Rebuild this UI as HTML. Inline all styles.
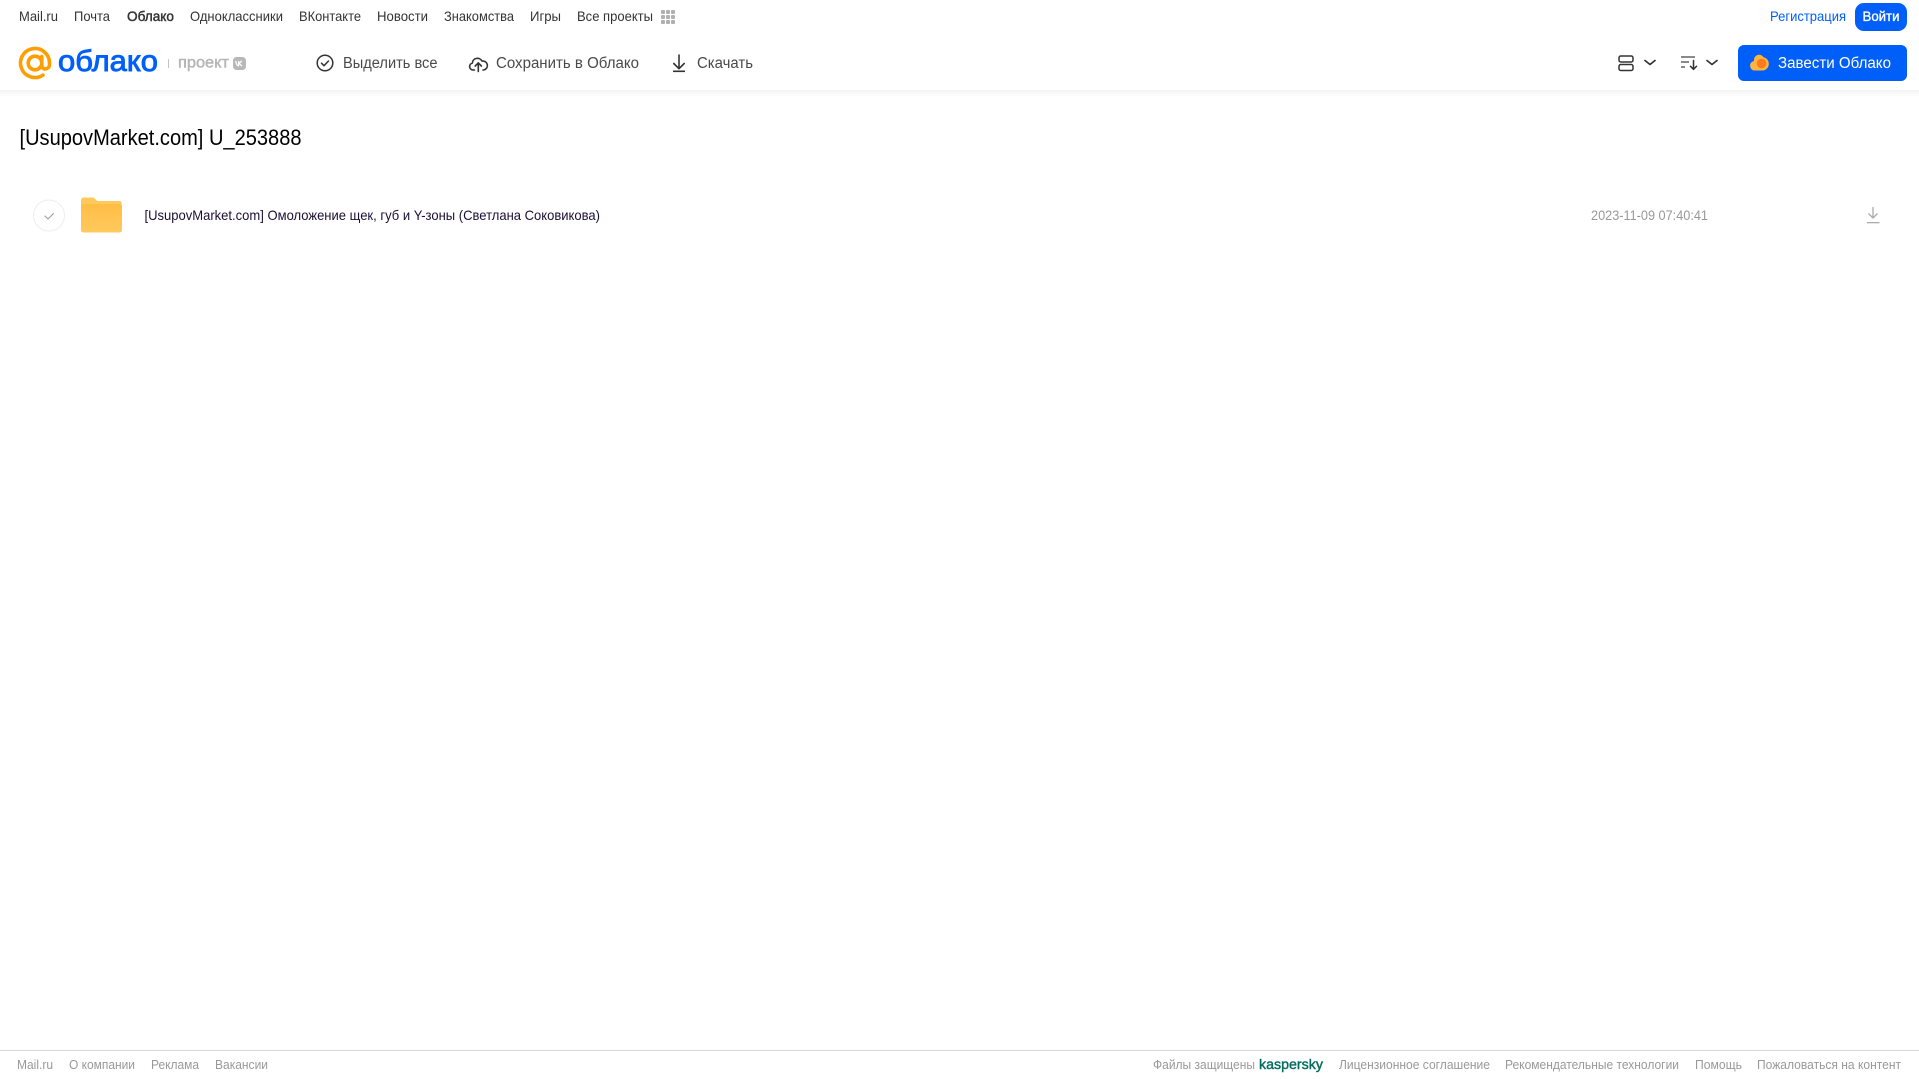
<!DOCTYPE html>
<html lang="ru">
<head>
<meta charset="utf-8">
<title>[UsupovMarket.com] U_253888</title>
<style>
html,body{margin:0;padding:0;background:#fff;width:1919px;height:1079px;overflow:hidden}
svg{display:block;position:absolute;left:0;top:0}
text{font-family:"Liberation Sans",sans-serif;white-space:pre}
.t{font-size:14px;fill:#333}
.a{font-size:15.500px;fill:#4a4a4a}
.f{font-size:13px;fill:#999}
</style>
</head>
<body>
<svg width="1919" height="1079" viewBox="0 0 1919 1079" xmlns="http://www.w3.org/2000/svg">
<defs>
<linearGradient id="sh" x1="0" y1="0" x2="0" y2="1"><stop offset="0" stop-color="#f3f3f3"/><stop offset="1" stop-color="#fff"/></linearGradient>
<linearGradient id="fd" x1="0" y1="0" x2="0" y2="1"><stop offset="0" stop-color="#ffbe45"/><stop offset="1" stop-color="#ffc95e"/></linearGradient>
</defs>
<rect x="0" y="90" width="1919" height="7" fill="url(#sh)"/>

<!-- top nav -->
<text class="t" x="19" y="21" textLength="39" lengthAdjust="spacingAndGlyphs">Mail.ru</text>
<text class="t" x="74" y="21" textLength="36" lengthAdjust="spacingAndGlyphs">Почта</text>
<text class="t" x="127" y="21" textLength="47" lengthAdjust="spacingAndGlyphs" stroke="#333" stroke-width=".45">Облако</text>
<text class="t" x="190" y="21" textLength="93" lengthAdjust="spacingAndGlyphs">Одноклассники</text>
<text class="t" x="299" y="21" textLength="62" lengthAdjust="spacingAndGlyphs">ВКонтакте</text>
<text class="t" x="377" y="21" textLength="51" lengthAdjust="spacingAndGlyphs">Новости</text>
<text class="t" x="444" y="21" textLength="70" lengthAdjust="spacingAndGlyphs">Знакомства</text>
<text class="t" x="530" y="21" textLength="31" lengthAdjust="spacingAndGlyphs">Игры</text>
<text class="t" x="577" y="21" textLength="76" lengthAdjust="spacingAndGlyphs">Все проекты</text>
<g fill="#b0b0b0">
<rect x="661" y="10" width="4" height="4" rx="1"/><rect x="666" y="10" width="4" height="4" rx="1"/><rect x="671" y="10" width="4" height="4" rx="1"/>
<rect x="661" y="15" width="4" height="4" rx="1"/><rect x="666" y="15" width="4" height="4" rx="1"/><rect x="671" y="15" width="4" height="4" rx="1"/>
<rect x="661" y="20" width="4" height="4" rx="1"/><rect x="666" y="20" width="4" height="4" rx="1"/><rect x="671" y="20" width="4" height="4" rx="1"/>
</g>

<text x="1770" y="21" font-size="14" fill="#005ff9" textLength="76" lengthAdjust="spacingAndGlyphs">Регистрация</text>
<rect x="1855" y="3" width="52" height="28" rx="9" fill="#005ff9"/>
<text x="1862.500" y="21" font-size="14" fill="#fff" stroke="#fff" stroke-width=".35" textLength="37" lengthAdjust="spacingAndGlyphs">Войти</text>

<!-- logo -->
<g fill="none" stroke="#ff9e00" stroke-width="3.600">
<circle cx="35" cy="63" r="6.800"/>
<path d="M41.800 56.500v9c0 4.800 7.700 4.800 7.700-1.500v-1a14.500 14.500 0 1 0-6.500 12.100" stroke-linecap="round"/>
</g>
<text x="58" y="71" font-size="30" fill="#005ff9" stroke="#005ff9" stroke-width=".9" textLength="100" lengthAdjust="spacingAndGlyphs">облако</text>
<rect x="168" y="59" width="1" height="9" fill="#c4c4c4"/>
<text x="178" y="67.500" font-size="15.500" fill="#b4b4b4" stroke="#b4b4b4" stroke-width=".4" textLength="51" lengthAdjust="spacingAndGlyphs">проект</text>
<rect x="233" y="57" width="13" height="13" rx="3.500" fill="#b8b8b8"/>
<path d="M235.500 61l1.300 3.500c.4 1 1 1.200 1.800 1.200v-4.700M241.800 60.800l-2.600 2.600 2.800 2.800" fill="none" stroke="#fff" stroke-width="1.200"/>

<!-- toolbar -->
<circle cx="325" cy="63" r="7.800" fill="none" stroke="#333" stroke-width="1.500"/>
<path d="M321.500 63.200l2.500 2.500 4.500-4.700" fill="none" stroke="#333" stroke-width="1.500" stroke-linecap="round" stroke-linejoin="round"/>
<text class="a" x="343" y="68" textLength="94.500" lengthAdjust="spacingAndGlyphs">Выделить все</text>

<path d="M474.500 70h-1.500a3.500 3.500 0 0 1-.7-6.900 5.200 5.200 0 0 1 9.800-2 4.500 4.500 0 0 1 1.600 8.900h-.7" fill="none" stroke="#333" stroke-width="1.600" stroke-linecap="round" stroke-linejoin="round"/>
<path d="M478.300 71.500V63M475.200 66l3.100-3.100 3.100 3.100" fill="none" stroke="#333" stroke-width="1.600" stroke-linecap="round" stroke-linejoin="round"/>
<text class="a" x="496" y="68" textLength="143" lengthAdjust="spacingAndGlyphs">Сохранить в Облако</text>

<path d="M679 55v13.500M673.800 63.500l5.200 5.200 5.200-5.200" fill="none" stroke="#333" stroke-width="1.600" stroke-linecap="round" stroke-linejoin="round"/>
<rect x="673" y="70.500" width="12" height="1.600" fill="#333"/>
<text class="a" x="697" y="68" textLength="56" lengthAdjust="spacingAndGlyphs">Скачать</text>

<!-- right toolbar -->
<rect x="1619" y="56" width="14" height="6" rx="1.800" fill="none" stroke="#333" stroke-width="1.500"/>
<rect x="1619" y="64.500" width="14" height="6" rx="1.800" fill="none" stroke="#333" stroke-width="1.500"/>
<path d="M1645 60.500l5 4 5-4" fill="none" stroke="#333" stroke-width="1.700" stroke-linecap="round" stroke-linejoin="round"/>
<path d="M1681 57h14M1681 62h8M1681 67h4" fill="none" stroke="#444" stroke-width="1.300"/>
<path d="M1693.500 60.500v8.500M1690.500 66.300l3 3 3-3" fill="none" stroke="#333" stroke-width="1.500" stroke-linecap="round" stroke-linejoin="round"/>
<path d="M1707 60.500l5 4 5-4" fill="none" stroke="#333" stroke-width="1.700" stroke-linecap="round" stroke-linejoin="round"/>

<rect x="1738" y="45" width="169" height="36" rx="6" fill="#005ff9"/>
<path d="M1755 70.500a4.800 4.800 0 0 1-3.500-8.200c1-.9 1.800-1 2.500-1.300a5.200 5.200 0 0 1 9.500-3.800 6.500 6.500 0 0 1 5.300 6.500 6.600 6.600 0 0 1-6.500 6.800z" fill="#ffb53d"/>
<circle cx="1761.500" cy="63.500" r="4.800" fill="#ff7a1f"/>
<text x="1778" y="68" font-size="15.500" fill="#fff" textLength="113" lengthAdjust="spacingAndGlyphs">Завести Облако</text>

<!-- title -->
<text x="19.500" y="145" font-size="22" fill="#000" textLength="282" lengthAdjust="spacingAndGlyphs">[UsupovMarket.com] U_253888</text>

<!-- row -->
<circle cx="49" cy="215.500" r="15.500" fill="#fff" stroke="#eeeeee" stroke-width="1"/>
<path d="M45 216l3 3 5.500-5.500" fill="none" stroke="#a3a3a3" stroke-width="1.200" stroke-linecap="round" stroke-linejoin="round"/>
<path d="M81 200a2.500 2.500 0 0 1 2.500-2.500h9c2.500 0 3.500 3.500 5.500 3.500h21.500a2 2 0 0 1 2 2v6H81z" fill="#ffc95e"/>
<rect x="81" y="204" width="41" height="28.500" rx="2.500" fill="url(#fd)"/>
<text x="144.500" y="220" font-size="14" fill="#1a1033" textLength="455.500" lengthAdjust="spacingAndGlyphs">[UsupovMarket.com] Омоложение щек, губ и Y-зоны (Светлана Соковикова)</text>
<text x="1591" y="220" font-size="14" fill="#999" textLength="117" lengthAdjust="spacingAndGlyphs">2023-11-09 07:40:41</text>
<path d="M1873 207v11M1868.500 213.500l4.500 4.500 4.500-4.500" fill="none" stroke="#ababab" stroke-width="1.300" stroke-linejoin="round"/>
<rect x="1867" y="222" width="12.500" height="1.300" fill="#ababab"/>

<!-- footer -->
<rect x="0" y="1050" width="1919" height="1" fill="#d6d6d6"/>
<text class="f" x="17" y="1069" textLength="36" lengthAdjust="spacingAndGlyphs">Mail.ru</text>
<text class="f" x="69" y="1069" textLength="66" lengthAdjust="spacingAndGlyphs">О компании</text>
<text class="f" x="151" y="1069" textLength="48" lengthAdjust="spacingAndGlyphs">Реклама</text>
<text class="f" x="215" y="1069" textLength="53" lengthAdjust="spacingAndGlyphs">Вакансии</text>
<text class="f" x="1153" y="1069" textLength="102" lengthAdjust="spacingAndGlyphs">Файлы защищены</text>
<text x="1259" y="1069" font-size="13.500" fill="#006d5c" stroke="#006d5c" stroke-width=".4" textLength="64" lengthAdjust="spacingAndGlyphs">kaspersky</text>
<text class="f" x="1339" y="1069" textLength="151" lengthAdjust="spacingAndGlyphs">Лицензионное соглашение</text>
<text class="f" x="1505" y="1069" textLength="174" lengthAdjust="spacingAndGlyphs">Рекомендательные технологии</text>
<text class="f" x="1695" y="1069" textLength="47" lengthAdjust="spacingAndGlyphs">Помощь</text>
<text class="f" x="1757" y="1069" textLength="144" lengthAdjust="spacingAndGlyphs">Пожаловаться на контент</text>
</svg>
</body>
</html>
